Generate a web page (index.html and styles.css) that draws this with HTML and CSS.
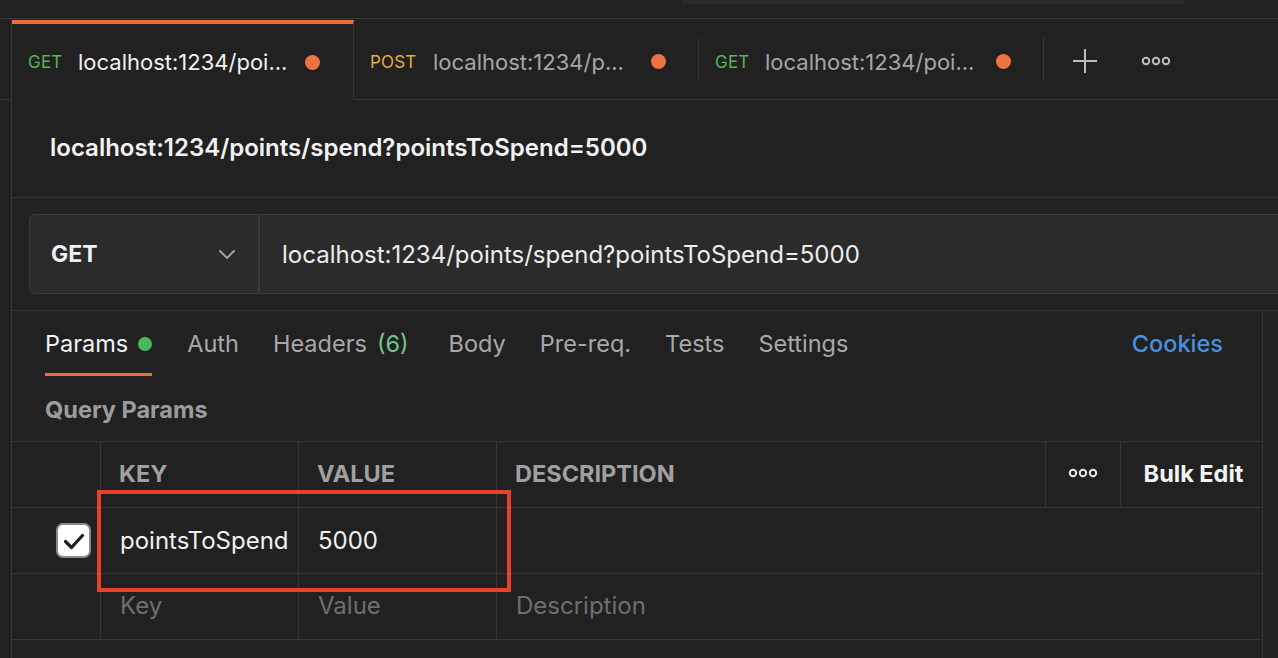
FILE: index.html
```html
<!DOCTYPE html>
<html>
<head>
<meta charset="utf-8">
<link rel="stylesheet" href="styles.css">
</head>
<body>
<div class="topbar"><div class="topbox"></div></div>
<div class="tabbar">
  <div class="tab-spacer"></div>
  <div class="tab active"><span class="m get">GET</span><span class="tl">localhost:1234/poi...</span><span class="dot"></span></div>
  <div class="tab"><span class="m post">POST</span><span class="tl dim">localhost:1234/p...</span><span class="dot"></span></div>
  <div class="tab last"><span class="m get">GET</span><span class="tl dim">localhost:1234/poi...</span><span class="dot"></span></div>
  <div class="tab-actions">
    <svg class="plus" width="26" height="26" viewBox="0 0 26 26"><path d="M13 1v24M1 13h24" stroke="#bdbdbd" stroke-width="2" fill="none"/></svg>
    <svg class="more" width="30" height="10" viewBox="0 0 30 10"><circle cx="5" cy="5" r="3.2" stroke="#bdbdbd" stroke-width="2" fill="none"/><circle cx="15" cy="5" r="3.2" stroke="#bdbdbd" stroke-width="2" fill="none"/><circle cx="25" cy="5" r="3.2" stroke="#bdbdbd" stroke-width="2" fill="none"/></svg>
  </div>
</div>
<div class="main">
  <div class="title">localhost:1234/points/spend?pointsToSpend=5000</div>
  <div class="urlrow">
    <div class="urlbar">
      <div class="method"><span>GET</span>
        <svg width="18" height="12" viewBox="0 0 18 12"><path d="M1.5 2.5l7.5 7.5 7.5-7.5" stroke="#a8a8a8" stroke-width="1.8" fill="none"/></svg>
      </div>
      <div class="urltext">localhost:1234/points/spend?pointsToSpend=5000</div>
    </div>
  </div>
  <div class="body">
    <div class="content">
      <div class="reqtabs">
        <div class="rt active">Params <span class="gdot"></span></div>
        <div class="rt">Auth</div>
        <div class="rt headers">Headers <span class="cnt">(6)</span></div>
        <div class="rt">Body</div>
        <div class="rt">Pre-req.</div>
        <div class="rt">Tests</div>
        <div class="rt">Settings</div>
        <div class="rt cookies">Cookies</div>
      </div>
      <div class="qp">Query Params</div>
      <div class="table">
        <div class="c hd"></div>
        <div class="c hd">KEY</div>
        <div class="c hd">VALUE</div>
        <div class="c hd">DESCRIPTION</div>
        <div class="c hd center"><svg width="30" height="10" viewBox="0 0 30 10"><circle cx="5" cy="5" r="3.2" stroke="#e8e8e8" stroke-width="2" fill="none"/><circle cx="15" cy="5" r="3.2" stroke="#e8e8e8" stroke-width="2" fill="none"/><circle cx="25" cy="5" r="3.2" stroke="#e8e8e8" stroke-width="2" fill="none"/></svg></div>
        <div class="c hd bulk">Bulk Edit</div>

        <div class="c chk"><span class="box"><svg width="22" height="18" viewBox="0 0 22 18"><path d="M2.5 9.5l6 6 11-12" stroke="#1e1e1e" stroke-width="3.2" fill="none" stroke-linecap="round" stroke-linejoin="round"/></svg></span></div>
        <div class="c val">pointsToSpend</div>
        <div class="c val">5000</div>
        <div class="c span3"></div>

        <div class="c"></div>
        <div class="c ph">Key</div>
        <div class="c ph">Value</div>
        <div class="c ph span3">Description</div>
      </div>
      <div class="highlight"></div>
    </div>
    <div class="rightpanel"></div>
  </div>
</div>
</body>
</html>
```
FILE: styles.css
```css
* { box-sizing: border-box; }
html, body { margin: 0; padding: 0; }
body {
  width: 1278px;
  height: 658px;
  overflow: hidden;
  background: #212121;
  font-family: Inter, "Noto Sans", sans-serif;
  color: #ededed;
}
.topbar {
  height: 19px;
  border-bottom: 1px solid #3a3a3a;
  display: flex;
}
.topbox {
  margin-left: 681px;
  width: 503px;
  height: 4px;
  background: #2a2a2a;
  border-radius: 0 0 6px 6px;
}
.tabbar {
  display: flex;
  height: 81px;
  align-items: stretch;
}
.tab-spacer {
  width: 12px;
  border-right: 1px solid #353535;
  border-bottom: 1px solid #353535;
}
.tab {
  width: 345px;
  display: flex;
  align-items: center;
  padding-left: 16px;
  padding-top: 5px;
  border-bottom: 1px solid #353535;
  position: relative;
}
.tab.active {
  width: 342px;
  border-top: 4px solid #ee6c3e;
  margin-top: 1px;
  border-right: 1px solid #353535;
  border-bottom: none;
  padding-top: 0;
}
.tab:not(.active)::after {
  content: "";
  position: absolute;
  right: 0;
  top: 19px;
  height: 42px;
  border-right: 1px solid #353535;
}
.m {
  font-size: 17px;
  width: 50px;
  letter-spacing: 0.2px;
}
.post { width: 63px; }
.get { color: #58b35f; }
.post { color: #e3ae3b; }
.tl {
  font-size: 22px;
  color: #f0f0f0;
  flex: 1;
  white-space: nowrap;
}
.tl.dim { color: #a6a6a6; }
.dot {
  width: 15px;
  height: 15px;
  border-radius: 50%;
  background: #f07243;
  margin-right: 33px;
}
.tab-actions {
  flex: 1;
  display: flex;
  align-items: center;
  border-bottom: 1px solid #353535;
  padding-left: 28px;
  padding-top: 3px;
}
.plus { margin-right: 43px; }
.main {
  border-left: 1px solid #353535;
  margin-left: 11px;
}
.title {
  height: 98px;
  border-bottom: 1px solid #353535;
  display: flex;
  align-items: center;
  padding-left: 38px;
  padding-bottom: 2px;
  font-size: 24px;
  font-weight: 600;
  color: #f2f2f2;
}
.urlrow {
  padding: 16px 0 16px 17px;
  border-bottom: 1px solid #353535;
}
.urlbar {
  height: 80px;
  width: 1300px;
  display: flex;
  background: #2b2b2b;
  border: 1px solid #3a3a3a;
  border-radius: 6px;
}
.method {
  width: 230px;
  border-right: 2px solid #3a3a3a;
  display: flex;
  align-items: center;
  justify-content: space-between;
  padding: 0 22px 0 21px;
  font-size: 23px;
  font-weight: 700;
  color: #f0f0f0;
}
.urltext {
  display: flex;
  align-items: center;
  padding-left: 22px;
  font-size: 24px;
  color: #ededed;
}
.body {
  display: flex;
  height: 347px;
}
.content {
  width: 1251px;
  border-right: 1px solid #353535;
  position: relative;
}
.rightpanel { flex: 1; }
.reqtabs {
  display: flex;
  align-items: flex-start;
  padding-left: 33px;
  padding-right: 39px;
  height: 82px;
}
.rt {
  font-size: 23.5px;
  color: #a8a8a8;
  padding: 18px 0 0 0;
  margin-right: 34px;
  height: 64px;
  display: flex;
  align-items: flex-start;
  gap: 10px;
}
.rt.headers { margin-right: 40px; }
.rt.active {
  color: #f2f2f2;
  border-bottom: 3px solid #ee6c3e;
  height: 65px;
  margin-right: 35px;
}
.gdot {
  width: 14px;
  height: 14px;
  border-radius: 50%;
  background: #48b95b;
  margin-top: 8px;
}
.cnt { color: #6fc68e; }
.rt.cookies {
  margin-left: auto;
  margin-right: 0;
  color: #4a8fe0;
  font-weight: 500;
}
.qp {
  padding-left: 33px;
  padding-top: 2px;
  font-size: 23.5px;
  font-weight: 700;
  color: #9c9c9c;
  height: 48px;
}
.table {
  display: grid;
  grid-template-columns: 89px 198px 198px 549px 75px 1fr;
  grid-auto-rows: 66px;
  border-top: 1px solid #353535;
}
.c {
  border-right: 1px solid #353535;
  border-bottom: 1px solid #353535;
  display: flex;
  align-items: center;
  padding-left: 19px;
  font-size: 24px;
}
.c:nth-child(6) { border-right: none; }
.hd {
  font-weight: 700;
  font-size: 23.5px;
  color: #a0a0a0;
  padding-left: 18px;
  padding-bottom: 3px;
}
.hd.center { justify-content: center; padding-left: 0; }
.hd.bulk { color: #f2f2f2; justify-content: center; padding-left: 4px; }
.span3 { grid-column: span 3; border-right: none; }
.val { color: #f0f0f0; }
.ph { color: #6e6e6e; padding-bottom: 3px; }
.chk { justify-content: flex-end; padding-right: 9px; }
.box {
  width: 35px;
  height: 35px;
  background: #ffffff;
  border: 2px solid #8a8a8a;
  border-radius: 7px;
  display: flex;
  align-items: center;
  justify-content: center;
}
.highlight {
  position: absolute;
  left: 85px;
  top: 179px;
  width: 414px;
  height: 102px;
  border: 4px solid #e8402a;
}
```
